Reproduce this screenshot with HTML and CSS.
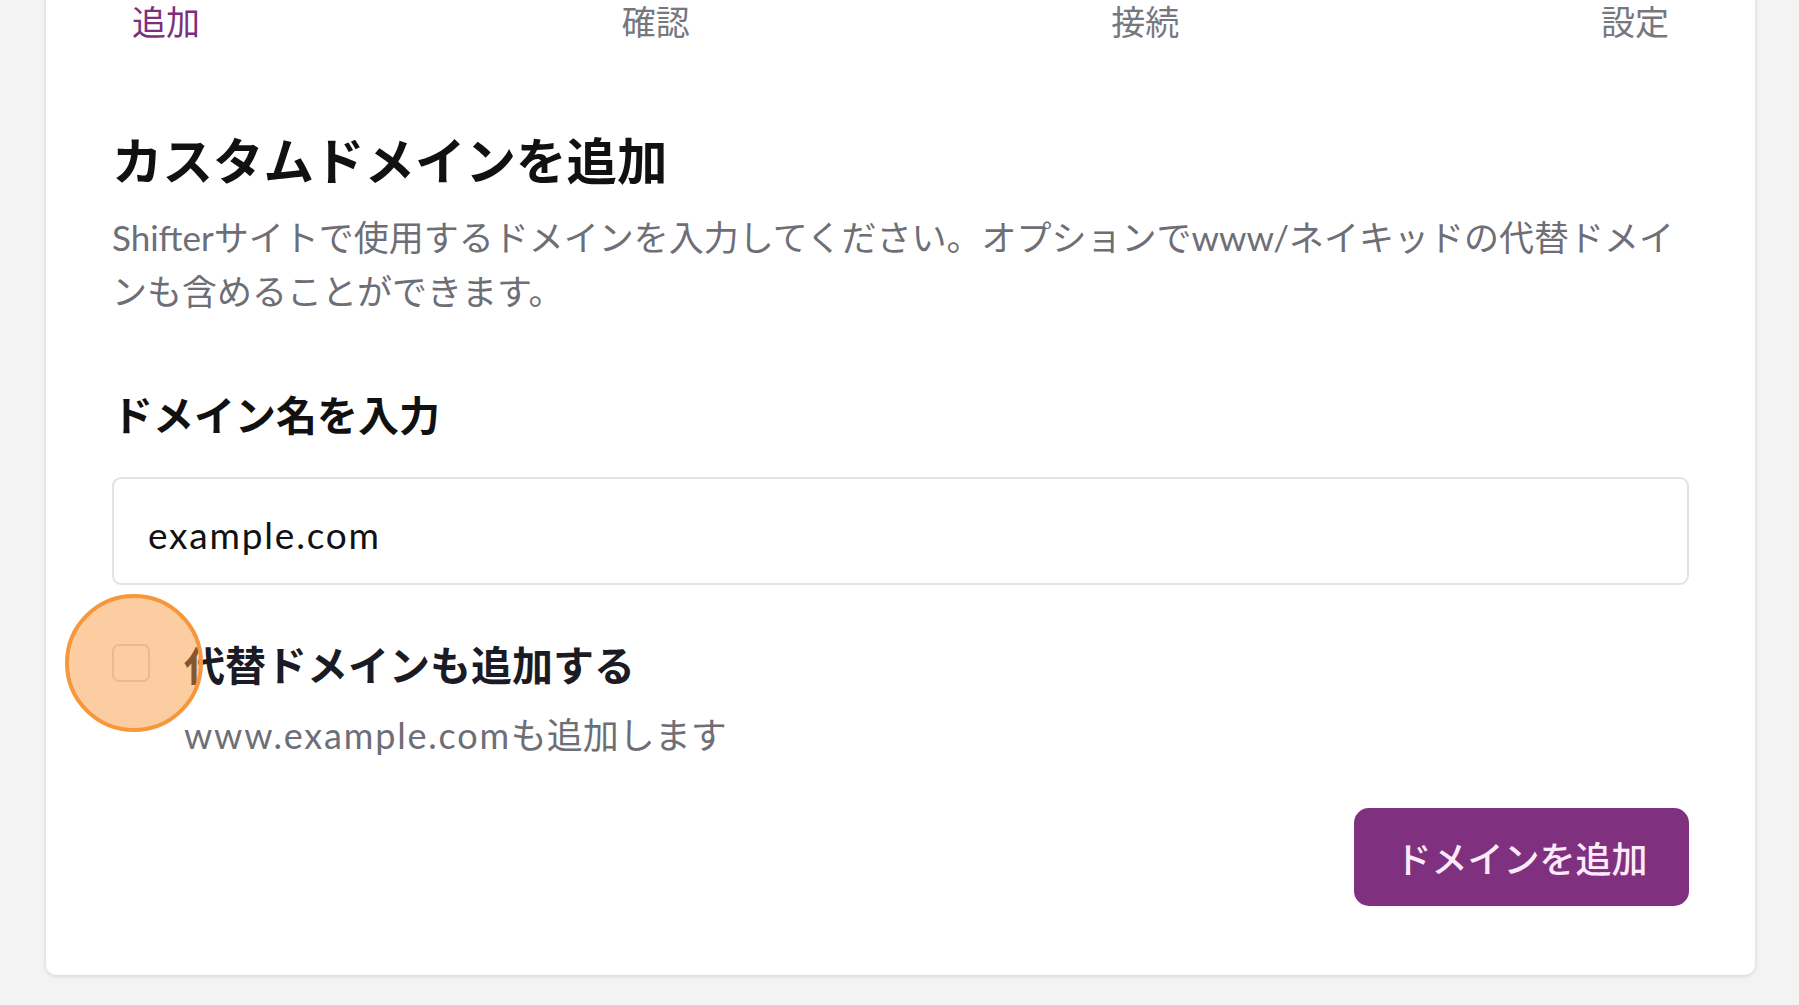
FILE: index.html
```html
<!DOCTYPE html>
<html lang="ja">
<head>
<meta charset="utf-8">
<title>カスタムドメインを追加</title>
<link rel="stylesheet" href="styles.css">
</head>
<body>
<div class="card">
  <div class="steps">
    <span class="step active">追加</span>
    <span class="step">確認</span>
    <span class="step">接続</span>
    <span class="step">設定</span>
  </div>
  <h1 class="title">カスタムドメインを追加</h1>
  <p class="desc">Shifterサイトで使用するドメインを入力してください。オプションでwww/ネイキッドの代替ドメインも含めることができます。</p>
  <h2 class="label">ドメイン名を入力</h2>
  <div class="input"><span class="latin-wide">example.com</span></div>
  <div class="check-row">
    <div class="check-box-wrap">
      <span class="checkbox"></span>
      <span class="click-ring"></span>
    </div>
    <div class="check-text">
      <div class="check-label">代替ドメインも追加する</div>
      <div class="check-sub"><span class="latin-wide">www.example.com</span>も追加します</div>
    </div>
  </div>
  <div class="actions">
    <button class="btn">ドメインを追加</button>
  </div>
</div>
</body>
</html>
```
FILE: styles.css
```css
html, body {
  margin: 0;
  padding: 0;
}
body {
  background: #f3f3f3;
  font-family: "Lato", "Noto Sans CJK JP", sans-serif;
  overflow: hidden;
  height: 1005px;
}
.card {
  box-sizing: border-box;
  width: 1709px;
  margin: -30px 0 0 46px;
  background: #ffffff;
  border-radius: 0 0 10px 10px;
  box-shadow: 0 1px 4px rgba(0, 0, 0, 0.14);
  padding: 31px 66px 69px;
}
.steps {
  display: flex;
  justify-content: space-between;
  padding: 0 20px;
  font-size: 34px;
  line-height: 41px;
  color: #77777f;
}
.step.active {
  color: #7b2f7e;
}
.title {
  margin: 86px 0 0;
  font-size: 50.5px;
  line-height: 65px;
  font-weight: 700;
  color: #111111;
}
.desc {
  margin: 17px 0 0;
  font-size: 35px;
  line-height: 54px;
  color: #6e6e76;
}
.latin-wide {
  letter-spacing: 1.8px;
}
.label {
  margin: 72px 0 0;
  font-size: 41px;
  line-height: 52px;
  font-weight: 700;
  color: #111111;
}
.input {
  box-sizing: border-box;
  margin-top: 35px;
  height: 108px;
  border: 2px solid #e3e3e3;
  border-radius: 9px;
  padding: 6px 34px 0;
  display: flex;
  align-items: center;
  font-size: 37px;
  color: #111111;
}
.check-row {
  display: flex;
  gap: 34px;
  margin-top: 54px;
}
.check-box-wrap {
  position: relative;
  width: 38px;
  height: 38px;
  margin-top: 5px;
  flex: none;
}
.checkbox {
  display: block;
  box-sizing: border-box;
  width: 38px;
  height: 38px;
  border: 2px solid #d9d9de;
  border-radius: 7px;
  background: #ffffff;
}
.click-ring {
  position: absolute;
  left: -47px;
  top: -50px;
  width: 138px;
  height: 138px;
  box-sizing: border-box;
  border-radius: 50%;
  border: 4px solid #f7973b;
  background: rgba(250, 150, 60, 0.48);
  z-index: 2;
}
.check-label {
  font-size: 41px;
  line-height: 53px;
  font-weight: 700;
  color: #1b1b25;
}
.check-sub {
  margin-top: 20px;
  font-size: 36px;
  line-height: 46px;
  color: #6e6e76;
}
.actions {
  display: flex;
  justify-content: flex-end;
  margin-top: 50px;
}
.btn {
  width: 335px;
  height: 98px;
  border: none;
  border-radius: 15px;
  background: #7f3180;
  color: #fdeafa;
  font-family: "Noto Sans CJK JP", sans-serif;
  font-size: 36px;
  font-weight: 500;
  padding: 0;
}
```
